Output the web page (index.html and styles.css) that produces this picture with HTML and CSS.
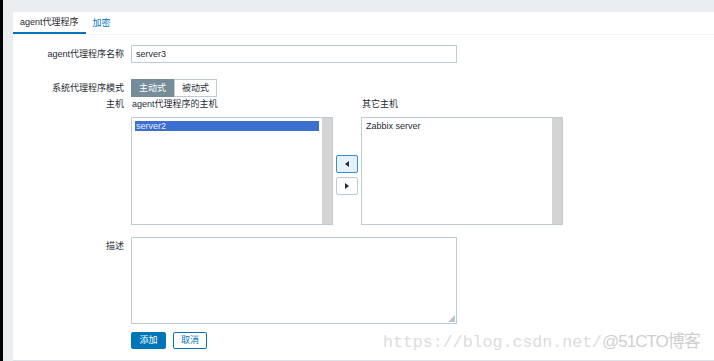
FILE: index.html
```html
<!DOCTYPE html>
<html lang="zh-CN">
<head>
    <meta charset="UTF-8">
    <title>agent代理程序</title>
    <link rel="stylesheet" href="styles.css">
</head>
<body>
    <div class="panel">
        <div class="tabs">
            <span class="tab active">agent代理程序</span>
            <span class="tab">加密</span>
        </div>

        <div class="row row-name">
            <label class="label">agent代理程序名称</label>
            <input type="text" class="text-input" value="server3">
        </div>

        <div class="row row-mode">
            <label class="label">系统代理程序模式</label>
            <div class="segmented">
                <span class="seg on">主动式</span>
                <span class="seg">被动式</span>
            </div>
        </div>

        <div class="row row-hosts">
            <label class="label">主机</label>
            <div class="hosts">
                <div class="hosts-head">agent代理程序的主机</div>
                <div></div>
                <div class="hosts-head">其它主机</div>

                <div class="listbox">
                    <div class="list-items">
                        <div class="item selected">server2</div>
                    </div>
                    <div class="scroll"></div>
                </div>
                <div class="move-btns">
                    <span class="move focus"><i class="tri left"></i></span>
                    <span class="move"><i class="tri right"></i></span>
                </div>
                <div class="listbox">
                    <div class="list-items">
                        <div class="item">Zabbix server</div>
                    </div>
                    <div class="scroll"></div>
                </div>
            </div>
        </div>

        <div class="row row-desc">
            <label class="label">描述</label>
            <div class="desc-wrap">
                <textarea class="desc"></textarea>
            </div>
        </div>

        <div class="row row-actions">
            <span class="label"></span>
            <span class="btn primary">添加</span>
            <span class="btn outline">取消</span>
        </div>

        <div class="watermark">https://blog.csdn.net/<span class="wm-tail">@51CTO博客</span></div>
    </div>
</body>
</html>
```

FILE: styles.css
```css
* {
    margin: 0;
    padding: 0;
    box-sizing: border-box;
}

html, body {
    height: 100%;
    overflow: hidden;
}

body {
    font-family: "Liberation Sans", "Noto Sans CJK SC", sans-serif;
    font-size: 9px;
    color: #1f2c33;
    background: #ebeef0;
    border-left: 3px solid #000;
    padding: 12px 0 0 10px;
}

.panel {
    position: relative;
    background: #fff;
    height: 349px;
    border-bottom: 1px solid #dde2e5;
}

/* tabs */
.tabs {
    display: flex;
    height: 23px;
    border-bottom: 1px solid #f0f2f3;
}

.tab {
    height: 22px;
    line-height: 22px;
    padding: 0 7px;
    color: #0275b8;
}

.tab.active {
    color: #1f2c33;
    border-bottom: 2px solid #0275b8;
    line-height: 21px;
}

/* form rows */
.row {
    display: flex;
    align-items: center;
}

.label {
    flex: 0 0 118px;
    text-align: right;
    padding-right: 7px;
    line-height: 10px;
}

.row-name {
    margin-top: 10px;
}

.text-input {
    width: 326px;
    height: 18px;
    border: 1px solid #bfcbd2;
    padding: 0 4px;
    font: inherit;
    color: #1f2c33;
    outline: none;
}

.row-mode {
    margin-top: 16px;
}

.segmented {
    display: flex;
}

.seg {
    width: 43px;
    height: 18px;
    line-height: 16px;
    text-align: center;
    border: 1px solid #bfcbd2;
    background: #fff;
}

.seg.on {
    background: #768d99;
    border-color: #768d99;
    color: #fff;
}

/* hosts */
.row-hosts {
    margin-top: 2px;
    align-items: flex-start;
}

.hosts {
    display: grid;
    grid-template-columns: 202px 22px 202px;
    grid-template-rows: 10px 108px;
    column-gap: 3px;
    row-gap: 8px;
}

.hosts-head {
    line-height: 10px;
    padding-left: 1px;
}

.listbox {
    display: flex;
    border: 1px solid #bfcbd2;
    background: #fff;
}

.list-items {
    flex: 1;
    padding: 3px;
}

.item {
    height: 10px;
    line-height: 10px;
    padding-left: 1px;
}

.item.selected {
    background: #3d6fce;
    color: #e6ecf8;
}

.scroll {
    width: 10px;
    background: #d4d4d4;
}

.move-btns {
    display: flex;
    flex-direction: column;
    gap: 4px;
    align-self: center;
    margin-top: 7px;
}

.move {
    display: flex;
    justify-content: center;
    align-items: center;
    width: 22px;
    height: 18px;
    border: 1px solid #bfcbd2;
    border-radius: 2px;
    background: #fff;
}

.move.focus {
    border-color: #3b8ad6;
    background: #e5f1fb;
}

.tri {
    width: 0;
    height: 0;
    border-top: 3px solid transparent;
    border-bottom: 3px solid transparent;
}

.tri.left {
    border-right: 4px solid #1f2c33;
}

.tri.right {
    border-left: 4px solid #1f2c33;
}

/* description */
.row-desc {
    margin-top: 12px;
    align-items: flex-start;
}

.row-desc .label {
    padding-top: 4px;
}

.desc-wrap {
    position: relative;
    width: 326px;
    height: 87px;
}

.desc {
    display: block;
    width: 100%;
    height: 100%;
    border: 1px solid #bfcbd2;
    resize: none;
    outline: none;
    font: inherit;
}

.desc-wrap::after {
    content: "";
    position: absolute;
    right: 2px;
    bottom: 2px;
    width: 7px;
    height: 7px;
    background: radial-gradient(circle, #b5bec4 0.7px, transparent 0.8px) 0 0 / 2px 2px;
    clip-path: polygon(100% 0, 100% 100%, 0 100%);
}

/* actions */
.row-actions {
    margin-top: 8px;
}

.btn {
    height: 17px;
    line-height: 15px;
    text-align: center;
    border: 1px solid #0275b8;
    border-radius: 2px;
}

.btn.primary {
    width: 35px;
    background: #0275b8;
    color: #fff;
}

.btn.outline {
    width: 34px;
    margin-left: 7px;
    background: #fff;
    color: #0275b8;
}

/* watermark overlay */
.watermark {
    position: absolute;
    left: 370px;
    top: 320px;
    font-family: "Liberation Mono", "Noto Sans CJK SC", monospace;
    font-size: 16.6px;
    line-height: 20px;
    white-space: nowrap;
    color: #dcdcdc;
}

.wm-tail {
    color: #cfcfcf;
    font-family: "Liberation Sans", "Noto Sans CJK SC", sans-serif;
    font-size: 17px;
    letter-spacing: -1px;
}
```
